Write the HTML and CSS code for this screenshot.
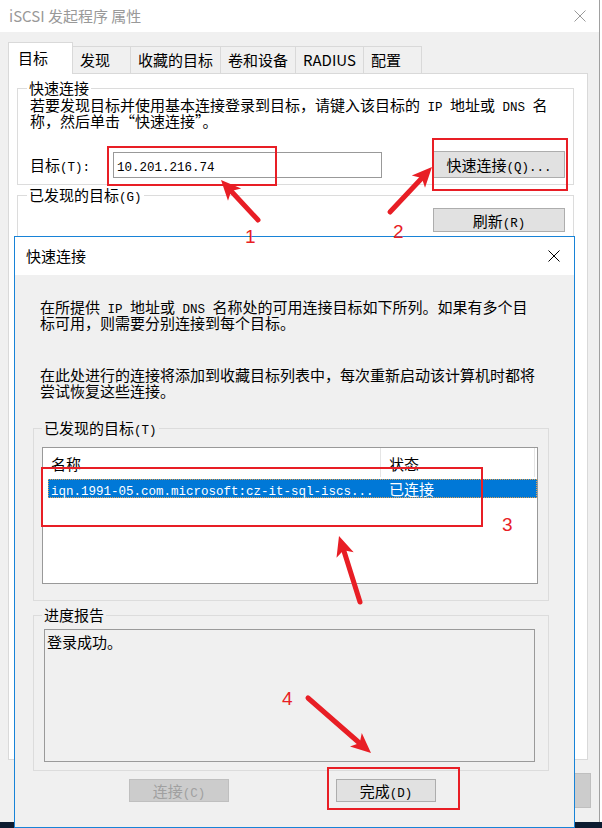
FILE: index.html
```html
<!DOCTYPE html>
<html lang="zh-CN">
<head>
    <meta charset="UTF-8">
    <meta name="viewport" content="width=device-width, initial-scale=1.0">
    <title>iSCSI 发起程序 属性</title>
    <link rel="stylesheet" href="styles.css">
</head>
<body>
    <!-- main properties window -->
    <div class="window">
        <div class="titlebar">
            <span class="title">iSCSI 发起程序 属性</span>
            <svg class="close" width="12" height="12" viewBox="0 0 12 12"><path d="M0.5 0.5L11.5 11.5M11.5 0.5L0.5 11.5" stroke="#999" stroke-width="1"/></svg>
        </div>
        <div class="tabs">
            <div class="tab active">目标</div>
            <div class="tab">发现</div>
            <div class="tab">收藏的目标</div>
            <div class="tab">卷和设备</div>
            <div class="tab">RADIUS</div>
            <div class="tab">配置</div>
        </div>
        <div class="panel">
            <fieldset class="group quick">
                <legend>快速连接</legend>
                <p class="desc">若要发现目标并使用基本连接登录到目标，请键入该目标的<span class="en"> IP </span>地址或<span class="en"> DNS </span>名<br>称，然后单击“快速连接”。</p>
                <div class="target-row">
                    <label class="target-label">目标<span class="en">(T):</span></label>
                    <div class="input"><span class="en">10.201.216.74</span></div>
                    <button class="btn quick-btn">快速连接<span class="en">(Q)...</span></button>
                </div>
            </fieldset>
            <fieldset class="group found">
                <legend>已发现的目标<span class="en">(G)</span></legend>
                <div class="refresh-row">
                    <button class="btn refresh-btn">刷新<span class="en">(R)</span></button>
                </div>
            </fieldset>
        </div>
        <div class="window-foot">
            <button class="btn disabled foot-btn"></button>
        </div>
    </div>
    <div class="taskbar"></div>

    <!-- quick connect dialog on top -->
    <div class="dialog">
        <div class="dlg-title">
            <span>快速连接</span>
            <svg width="12" height="12" viewBox="0 0 12 12"><path d="M0.5 0.5L11.5 11.5M11.5 0.5L0.5 11.5" stroke="#000" stroke-width="1"/></svg>
        </div>
        <div class="dlg-body">
            <p class="dlg-text">在所提供<span class="en"> IP </span>地址或<span class="en"> DNS </span>名称处的可用连接目标如下所列。如果有多个目<br>标可用，则需要分别连接到每个目标。</p>
            <p class="dlg-text second">在此处进行的连接将添加到收藏目标列表中，每次重新启动该计算机时都将<br>尝试恢复这些连接。</p>

            <fieldset class="group list-group">
                <legend>已发现的目标<span class="en">(T)</span></legend>
                <div class="listview">
                    <div class="lv-head">
                        <div class="lv-col name">名称</div>
                        <div class="lv-col state">状态</div>
                    </div>
                    <div class="lv-row">
                        <div class="lv-cell name"><span class="en">iqn.1991-05.com.microsoft:cz-it-sql-iscs...</span></div>
                        <div class="lv-cell state">已连接</div>
                    </div>
                </div>
            </fieldset>

            <fieldset class="group progress">
                <legend>进度报告</legend>
                <div class="report">登录成功。</div>
            </fieldset>

            <div class="dlg-buttons">
                <button class="btn disabled">连接<span class="en">(C)</span></button>
                <button class="btn done-btn">完成<span class="en">(D)</span></button>
            </div>
        </div>
    </div>

    <!-- red annotations drawn over the screenshot -->
    <svg class="marks" width="602" height="828" viewBox="0 0 602 828">
        <g stroke="#e81e25" stroke-width="5" stroke-linecap="round" fill="none">
            <line x1="258" y1="220" x2="231.5" y2="191.5"/>
            <line x1="390" y1="212" x2="421.5" y2="178.5"/>
            <line x1="360" y1="602" x2="343.8" y2="550.5"/>
            <line x1="308" y1="698" x2="359.5" y2="743"/>
        </g>
        <g fill="#e81e25">
            <polygon points="221,180 241.2,188.6 231.2,191 228,200.8"/>
            <polygon points="432,167 425,187.7 421.8,178 411.8,175.5"/>
            <polygon points="339,536 353.7,552.3 343.6,550.2 336.5,557.7"/>
            <polygon points="371,753 350,746.6 359.7,743.1 361.8,733"/>
        </g>
    </svg>
    <div class="mark-box box1"></div>
    <div class="mark-box box2"></div>
    <div class="mark-box box3"></div>
    <div class="mark-box box4"></div>
    <span class="mark-num num1">1</span>
    <span class="mark-num num2">2</span>
    <span class="mark-num num3">3</span>
    <span class="mark-num num4">4</span>
</body>
</html>
```

FILE: styles.css
```css
* {
    margin: 0;
    padding: 0;
    box-sizing: border-box;
}
body {
    position: relative;
    width: 602px;
    height: 828px;
    overflow: hidden;
    background-color: #fff;
    font-family: "Noto Sans CJK SC", sans-serif;
    font-size: 15px;
    color: #000;
}
.en {
    font-family: "Liberation Mono", monospace;
    font-size: 12.5px;
    line-height: 0;
}
button {
    font-family: inherit;
    font-size: 15px;
    color: #000;
}

/* outer window */
.window {
    width: 600px;
    height: 822px;
    background-color: #f0f0f0;
    border-right: 1px solid #a0a0a0;
    display: flex;
    flex-direction: column;
}
.titlebar {
    height: 32px;
    flex-shrink: 0;
    background-color: #fff;
    display: flex;
    align-items: center;
    justify-content: space-between;
    padding: 0 13px 0 9px;
}
.title {
    color: #999;
    line-height: 20px;
}
.tabs {
    height: 41px;
    flex-shrink: 0;
    display: flex;
    align-items: flex-end;
    padding-left: 8px;
}
.tab {
    height: 27px;
    min-width: 59px;
    padding: 0 7px;
    margin-left: -1px;
    line-height: 25px;
    border: 1px solid #d9d9d9;
    border-bottom: none;
    background-color: #f0f0f0;
}
.tab.active {
    position: relative;
    z-index: 1;
    height: 32px;
    min-width: 65px;
    margin-left: 0;
    margin-bottom: -1px;
    padding-left: 9px;
    line-height: 29px;
    background-color: #fff;
}
.panel {
    height: 687px;
    flex-shrink: 0;
    margin: 0 11px 0 8px;
    padding: 5px 13px 0 8px;
    background-color: #fff;
    border: 1px solid #d9d9d9;
    display: flex;
    flex-direction: column;
}
.group {
    border: 1px solid #dcdcdc;
    min-width: 0;
}
.group legend {
    margin-left: 9px;
    padding: 0 2px;
    line-height: 18px;
}
.desc {
    margin-left: 12px;
    line-height: 16px;
    white-space: nowrap;
}
.target-row {
    display: flex;
    align-items: center;
    margin-top: 22px;
    padding: 0 8px 6px 12px;
}
.target-label {
    width: 83px;
}
.input {
    width: 269px;
    height: 26px;
    border: 1px solid #999;
    background-color: #fff;
    padding-left: 3px;
    line-height: 24px;
}
.btn {
    height: 23px;
    width: 100px;
    background-color: #e1e1e1;
    border: 1px solid #adadad;
    line-height: 21px;
}
.btn.disabled {
    background-color: #cccccc;
    border-color: #bfbfbf;
    color: #a0a0a0;
}
.quick-btn {
    width: 132px;
    height: 27px;
    margin-left: auto;
}
.found {
    flex: 1;
    margin: 1px 0 12px;
}
.refresh-row {
    display: flex;
    justify-content: flex-end;
    margin-top: 4px;
    padding-right: 8px;
}
.refresh-btn {
    width: 132px;
    height: 24px;
}
.window-foot {
    display: flex;
    justify-content: flex-end;
    padding: 13px 8px 0 0;
}
.foot-btn {
    width: 100px;
    height: 35px;
}
.taskbar {
    height: 6px;
    background-color: #0c1b30;
}

/* quick connect dialog */
.dialog {
    position: absolute;
    left: 14px;
    top: 236px;
    width: 561px;
    height: 592px;
    border: 1px solid #1883d7;
    background-color: #f0f0f0;
    display: flex;
    flex-direction: column;
}
.dlg-title {
    height: 38px;
    flex-shrink: 0;
    background-color: #fff;
    display: flex;
    align-items: center;
    justify-content: space-between;
    padding: 0 14px 0 11px;
    line-height: 20px;
}
.dlg-body {
    padding: 24px 25px 0 18px;
}
.dlg-text {
    padding-left: 7px;
    line-height: 16px;
    white-space: nowrap;
}
.dlg-text.second {
    margin-top: 36px;
}
.list-group {
    margin-top: 20px;
    padding-bottom: 16px;
}
.list-group legend,
.progress legend {
    margin-left: 8px;
}
.listview {
    height: 137px;
    margin: 10px 10px 0 8px;
    background-color: #fff;
    border: 1px solid #999;
}
.lv-head {
    display: flex;
    height: 29px;
}
.lv-col {
    padding: 2px 0 0 8px;
    line-height: 27px;
    border-right: 1px solid #e5e5e5;
}
.lv-col.name {
    width: 338px;
}
.lv-col.state {
    width: 154px;
}
.lv-row {
    display: flex;
    align-items: center;
    height: 19px;
    margin: 2px 0 0 5px;
    background-color: #0078d7;
    border: 1px dotted #e0a050;
    color: #fff;
    line-height: 17px;
}
.lv-cell.name {
    width: 332px;
    padding-left: 2px;
    white-space: nowrap;
}
.lv-cell.state {
    padding-left: 8px;
}
.progress {
    margin-top: 5px;
    padding-bottom: 8px;
}
.report {
    height: 133px;
    margin: 5px 13px 0 10px;
    padding: 2px 0 0 2px;
    border: 1px solid #9a9a9a;
    line-height: 20px;
}
.dlg-buttons {
    display: flex;
    gap: 107px;
    margin-top: 8px;
    padding-left: 96px;
}

/* annotations */
.marks {
    position: absolute;
    left: 0;
    top: 0;
}
.mark-box {
    position: absolute;
    border: 2px solid #e81e25;
}
.box1 { left: 107px; top: 146px; width: 170px; height: 40px; }
.box2 { left: 432px; top: 138px; width: 136px; height: 53px; }
.box3 { left: 41px; top: 467px; width: 442px; height: 60px; }
.box4 { left: 327px; top: 767px; width: 133px; height: 43px; }
.mark-num {
    position: absolute;
    font-family: "Liberation Sans", sans-serif;
    font-size: 19px;
    line-height: 19px;
    color: #e81e25;
}
.num1 { left: 245px; top: 227px; }
.num2 { left: 393px; top: 222px; }
.num3 { left: 502px; top: 515px; }
.num4 { left: 282px; top: 689px; }
```
